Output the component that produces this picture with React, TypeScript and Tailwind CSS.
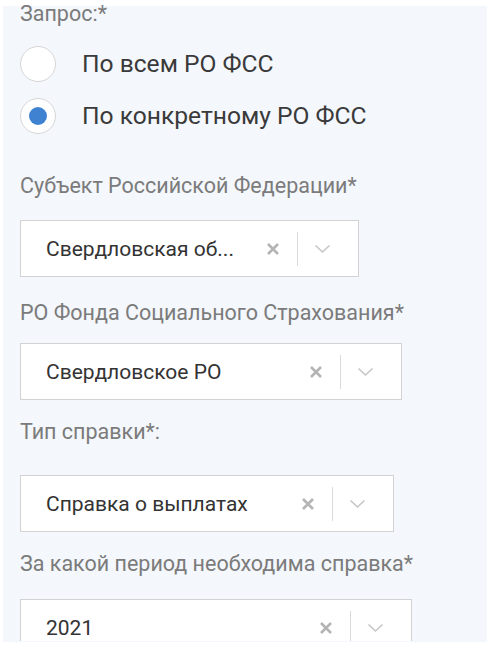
import React from 'react';

const CrossIcon = () => (
    <svg width="14" height="14" viewBox="0 0 14 14" fill="none" xmlns="http://www.w3.org/2000/svg">
        <path d="M2 2L12 12M12 2L2 12" stroke="#b4b4b4" strokeWidth="2.6" />
    </svg>
);

const ChevronIcon = () => (
    <svg width="17" height="10" viewBox="0 0 17 10" fill="none" xmlns="http://www.w3.org/2000/svg">
        <path d="M1.5 1.5L8.5 8L15.5 1.5" stroke="#c6c6c6" strokeWidth="1.6" />
    </svg>
);

const Radio = ({ checked, label }: { checked?: boolean; label: string }) => (
    <label className="flex items-center h-[52px] cursor-pointer">
        <span className="w-[36px] h-[36px] rounded-full border-[1.5px] border-[#d6d6d6] bg-white flex items-center justify-center shrink-0">
            {checked && <span className="w-[18px] h-[18px] rounded-full bg-[#3f82d1]" />}
        </span>
        <span className="ml-[26px] text-[24.6px] leading-[28px] text-[#3a3a3a]">{label}</span>
    </label>
);

const Select = ({ value, width }: { value: string; width: string }) => (
    <div className={`${width} h-[57px] border border-[#d2d2d2] bg-white flex items-center pl-[25px] pr-[27px]`}>
        <span className="flex-1 text-[21px] leading-[26px] text-[#333] whitespace-nowrap">{value}</span>
        <CrossIcon />
        <span className="w-px h-[34px] bg-[#dadada] ml-[17px] mr-[16px]" />
        <ChevronIcon />
    </div>
);

export default function App() {
    return (
        <div className="min-h-screen bg-white pt-[6px] pl-[3px] font-['Roboto','Liberation_Sans',sans-serif]">
            <div className="w-[484px] h-[636px] bg-[#f4f7fc] pl-[17px]">
                <p className="text-[21.5px] leading-[16px] text-[#7b7b7b]">Запрос:*</p>

                {/* radio group */}
                <div className="mt-[16px] flex flex-col">
                    <Radio label="По всем РО ФСС" />
                    <Radio label="По конкретному РО ФСС" checked />
                </div>

                <p className="mt-[32px] text-[21.5px] leading-[24px] text-[#7b7b7b]">Субъект Российской Федерации*</p>
                <div className="mt-[22px]">
                    <Select value="Свердловская об..." width="w-[339px]" />
                </div>

                <p className="mt-[24px] text-[21.5px] leading-[24px] text-[#7b7b7b]">РО Фонда Социального Страхования*</p>
                <div className="mt-[18px]">
                    <Select value="Свердловское РО" width="w-[382px]" />
                </div>

                <p className="mt-[20px] text-[21.5px] leading-[24px] text-[#7b7b7b]">Тип справки*:</p>
                <div className="mt-[31px]">
                    <Select value="Справка о выплатах" width="w-[374px]" />
                </div>

                <p className="mt-[20px] text-[21.5px] leading-[24px] text-[#7b7b7b]">За какой период необходима справка*</p>
                {/* last field is cut by the panel bottom */}
                <div className="mt-[23px] h-[42px] overflow-hidden">
                    <Select value="2021" width="w-[392px]" />
                </div>
            </div>
        </div>
    );
}
